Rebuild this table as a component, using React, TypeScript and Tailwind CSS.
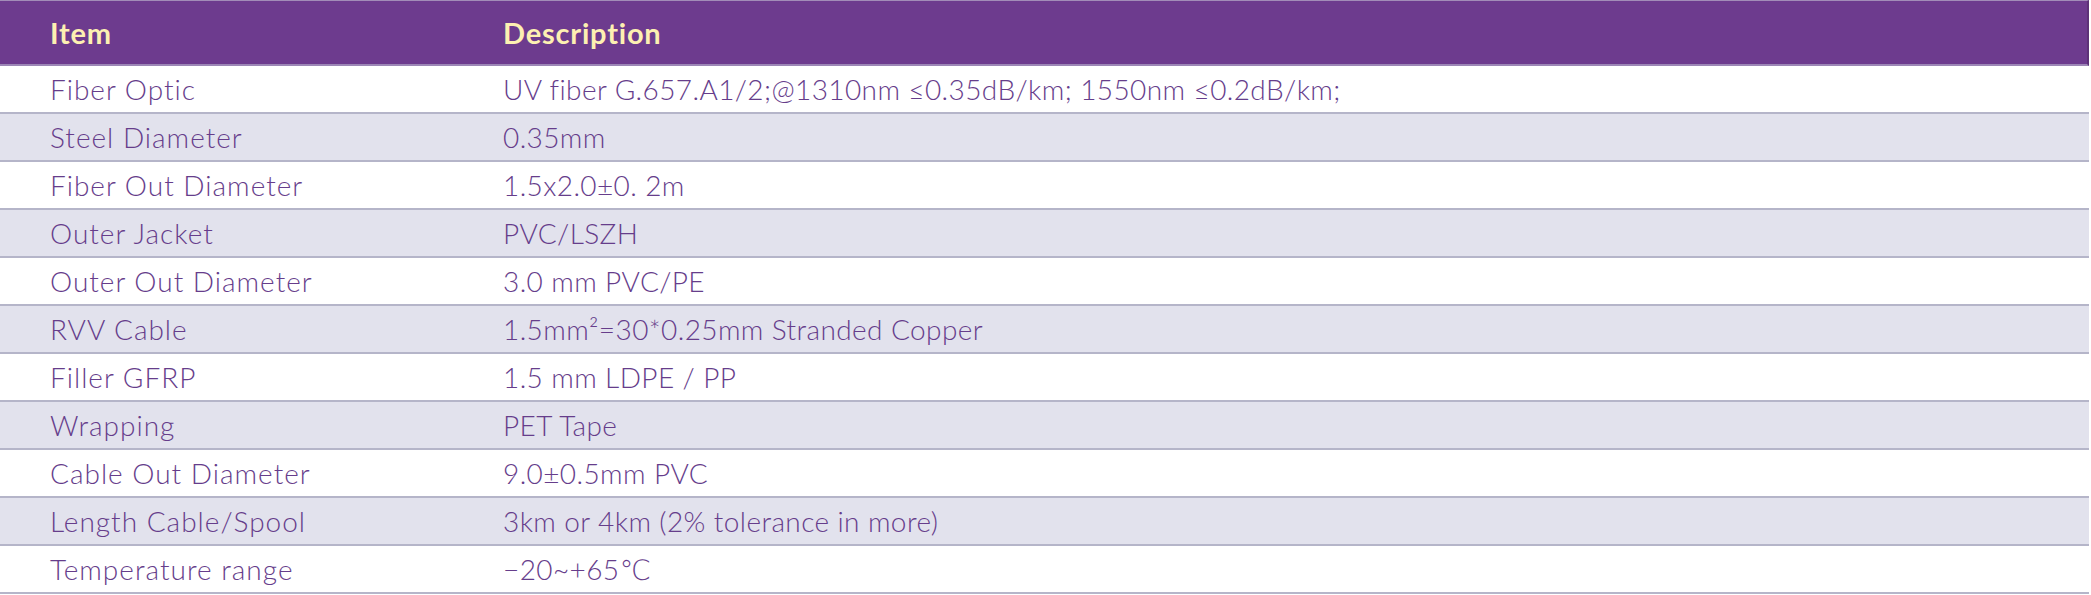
const rows: [string, string][] = [
  ["Fiber Optic", "UV fiber G.657.A1/2;@1310nm ≤0.35dB/km; 1550nm ≤0.2dB/km;"],
  ["Steel Diameter", "0.35mm"],
  ["Fiber Out Diameter", "1.5x2.0±0. 2m"],
  ["Outer Jacket", "PVC/LSZH"],
  ["Outer Out Diameter", "3.0 mm PVC/PE"],
  ["RVV Cable", "1.5mm²=30*0.25mm Stranded Copper"],
  ["Filler GFRP", "1.5 mm LDPE / PP"],
  ["Wrapping", "PET Tape"],
  ["Cable Out Diameter", "9.0±0.5mm PVC"],
  ["Length Cable/Spool", "3km or 4km (2% tolerance in more)"],
  ["Temperature range", "−20~+65℃"],
];

export default function App() {
  return (
    <div className="w-[2091px] h-[595px] bg-white font-['Lato','Liberation_Sans',sans-serif]">
      <div className="w-[2089px]">
        {/* Header */}
        <div className="grid grid-cols-[503px_1fr] h-[66px] items-center bg-[#6d3b8e] border-t border-[#a28cb8] border-b-2 border-b-[#9c86b6] border-r-2 border-r-[#5d3278] text-[29px] font-bold tracking-[0.8px] text-[#fdf0b2]">
          <div className="pl-[50px]">Item</div>
          <div>Description</div>
        </div>

        {/* Rows */}
        {rows.map(([item, desc], i) => (
          <div
            key={item}
            className={`grid grid-cols-[503px_1fr] h-[48px] items-center border-b-2 border-[#b5b5c9] text-[28px] font-light text-[#663d8b] ${
              i % 2 === 1 ? "bg-[#e2e2ed]" : "bg-white"
            }`}
          >
            <div className="pl-[50px] tracking-[1px]">{item}</div>
            <div className="tracking-[0.4px] font-['Lato','DejaVu_Sans',sans-serif]">{desc}</div>
          </div>
        ))}
      </div>
    </div>
  );
}
